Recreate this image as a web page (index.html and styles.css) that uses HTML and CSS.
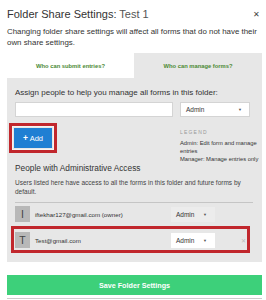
FILE: index.html
```html
<!DOCTYPE html>
<html lang="en">
<head>
<meta charset="utf-8">
<title>Folder Share Settings</title>
<link rel="stylesheet" href="styles.css">
</head>
<body>
<div class="dialog">
  <div class="header">
    <h1 class="title">Folder Share Settings: <span class="sub">Test 1</span></h1>
    <span class="close">✕</span>
  </div>
  <p class="desc">Changing folder share settings will affect all forms that do not have their own share settings.</p>
  <div class="tabs">
    <div class="tab active">Who can submit entries?</div>
    <div class="tab">Who can manage forms?</div>
  </div>
  <div class="panel">
    <p class="label">Assign people to help you manage all forms in this folder:</p>
    <div class="assign-row">
      <div class="input"></div>
      <div class="select"><span>Admin</span><span class="caret">▼</span></div>
    </div>
    <div class="add-row">
      <div class="add-wrap"><button class="add-btn"><b>+</b> Add</button></div>
      <div class="legend">
        <p class="legend-title">LEGEND</p>
        <p class="legend-text">Admin: Edit form and manage entries</p>
        <p class="legend-text2">Manager: Manage entries only</p>
      </div>
    </div>
    <h2 class="section">People with Administrative Access</h2>
    <p class="note">Users listed here have access to all the forms in this folder and future forms by default.</p>
    <div class="rule"></div>
    <div class="person">
      <div class="avatar">I</div>
      <div class="email">iftekhar127@gmail.com (owner)</div>
      <div class="role"><span>Admin</span><span class="caret">▼</span></div>
      <div class="remove"></div>
    </div>
    <div class="person hl">
      <div class="avatar">T</div>
      <div class="email">Test@gmail.com</div>
      <div class="role white"><span>Admin</span><span class="caret">▼</span></div>
      <div class="remove">✕</div>
    </div>
  </div>
  <button class="save">Save Folder Settings</button>
  <div class="bottom-line"></div>
</div>
</body>
</html>
```
FILE: styles.css
```css
* { box-sizing: border-box; margin: 0; padding: 0; }
body {
  margin: 0;
  background: #fff;
  font-family: "Liberation Sans", Arial, sans-serif;
  color: #333;
  width: 266px;
  height: 300px;
  overflow: hidden;
}
.dialog { padding: 0 4px 0 7px; }
.header {
  display: flex;
  justify-content: space-between;
  align-items: center;
  padding-top: 8px;
  height: 21px;
}
.title { font-size: 11px; font-weight: normal; line-height: 13px; color: #333; }
.title .sub { color: #555; }
.close { font-size: 8px; line-height: 13px; color: #444; padding-right: 2px; }
.desc { margin-top: 5px; font-size: 7.9px; line-height: 11px; color: #333; }
.tabs {
  margin-top: 5px;
  display: grid;
  grid-template-columns: 127px 1fr;
  height: 25px;
}
.tab {
  display: flex;
  align-items: center;
  justify-content: center;
  font-size: 5.8px;
  font-weight: bold;
  color: #4b8a34;
  background: #e7e7e7;
}
.tab.active { background: #fff; }
.panel { background: #e7e7e7; padding: 10px 12px 9px 8px; }
.label { font-size: 8px; line-height: 10px; color: #333; }
.assign-row { display: flex; gap: 7px; margin-top: 4px; }
.input { width: 158px; height: 15px; background: #fff; border: 1px solid #d4d4d4; }
.select {
  width: 70px;
  height: 15px;
  background: #fff;
  border: 1px solid #d4d4d4;
  display: flex;
  align-items: center;
  justify-content: space-between;
  padding: 0 7px 0 5px;
  font-size: 6.5px;
  color: #333;
}
.caret { font-size: 4px; color: #555; }
.add-row { display: flex; justify-content: space-between; margin-top: 6px; }
.add-wrap { position: relative; margin: 5px 0 0 -1px; align-self: flex-start; }
.add-btn {
  display: block;
  width: 38px;
  height: 20px;
  background: #1f7fd3;
  color: #fff;
  border: none;
  font-family: inherit;
  font-size: 7.5px;
}
.add-btn b { font-size: 8.5px; }
.add-wrap::after {
  content: "";
  position: absolute;
  inset: -5px;
  border: 3px solid #c1272d;
  box-shadow: inset 0 0 0 1px #f4f4f4;
}
.legend { width: 80px; margin: 5px -10px 0 0; }
.legend-title { font-size: 5px; line-height: 8px; letter-spacing: 1.2px; color: #999; }
.legend-text { margin-top: 3px; font-size: 5.8px; line-height: 8px; color: #333; }
.legend-text2 { font-size: 5.8px; line-height: 8px; color: #333; }
.section { font-size: 8.3px; font-weight: normal; line-height: 10px; color: #333; }
.note { margin-top: 5px; font-size: 6.5px; line-height: 9px; color: #444; }
.rule { margin-top: 6px; border-top: 1px solid #c5c5c5; margin-right: -3px; }
.person { display: flex; align-items: center; padding: 3px 0 4px; }
.person.hl { position: relative; padding: 6px 0 5px; }
.person.hl::after {
  content: "";
  position: absolute;
  top: 0;
  bottom: 0;
  left: -4px;
  right: 0;
  border: 3px solid #c1272d;
}
.avatar {
  width: 15px;
  height: 16px;
  background: #b8b8b8;
  color: #444;
  font-size: 10.5px;
  line-height: 16px;
  text-align: center;
}
.email { flex: 1; margin-left: 5px; font-size: 6.2px; color: #333; }
.role {
  width: 44px;
  height: 15px;
  display: flex;
  align-items: center;
  justify-content: space-between;
  padding: 0 8px 0 5px;
  font-size: 6.5px;
  background: #ececec;
}
.role.white { background: #fff; }
.remove { width: 35px; text-align: right; padding-right: 4px; font-size: 6px; color: #bbb; }
.save {
  display: block;
  width: 100%;
  margin-top: 13px;
  height: 20px;
  background: #3dd07a;
  color: #fff;
  border: none;
  font-family: inherit;
  font-weight: bold;
  font-size: 7.2px;
}
.bottom-line { margin-top: 3px; border-top: 1px solid #ccc; }
```
